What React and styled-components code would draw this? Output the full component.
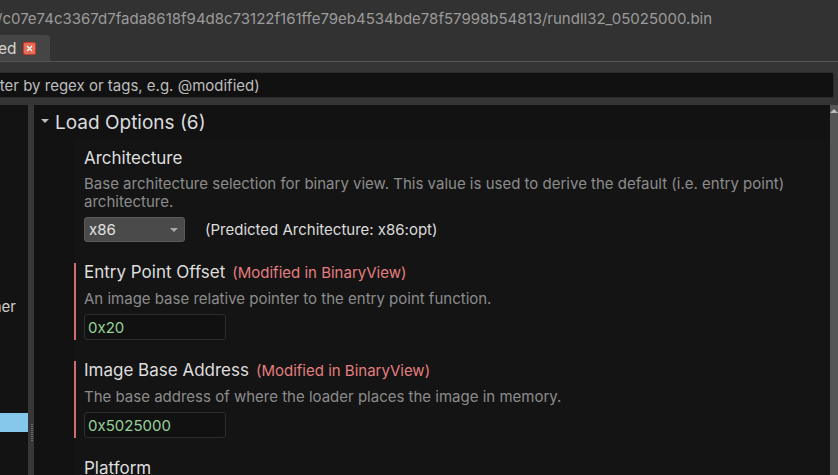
import React from "react";
import styled, { createGlobalStyle } from "styled-components";

const Global = createGlobalStyle`
  html, body { margin: 0; padding: 0; background: #323232; }
  body { font-family: Inter, "Noto Sans", sans-serif; }
  * { box-sizing: border-box; }
`;

const Root = styled.div`
  width: 838px;
  height: 475px;
  overflow: hidden;
  display: flex;
  flex-direction: column;
  background: #323232;
`;

const TitleBar = styled.div`
  height: 35px;
  display: flex;
  align-items: center;
  overflow: hidden;
  white-space: nowrap;
  color: #9b9b9b;
  font-size: 15px;
  padding-top: 1px;
`;

const TitleText = styled.span`
  margin-left: -3px;
`;

const TabBar = styled.div`
  height: 27px;
  display: flex;
  align-items: flex-end;
  border-bottom: 1px solid #555;
`;

const Tab = styled.div`
  height: 26px;
  width: 50px;
  background: #454545;
  border-top-right-radius: 3px;
  display: flex;
  align-items: center;
  gap: 6px;
  overflow: hidden;
  color: #d6d6d6;
  font-size: 15.5px;
`;

const TabLabel = styled.span`
  margin-left: -2px;
`;

const CloseBox = styled.span`
  width: 13px;
  height: 13px;
  border-radius: 2px;
  background: #e56d55;
  border: 1px solid #c63b2b;
  display: flex;
  align-items: center;
  justify-content: center;
`;

const FilterRow = styled.div`
  padding: 10px 4px 4px 0;
  background: #353535;
`;

const FilterInput = styled.div`
  height: 26px;
  background: #111111;
  border: 1px solid #2a2a2a;
  border-left: none;
  border-radius: 0 3px 3px 0;
  display: flex;
  align-items: center;
  color: #bdbdbd;
  font-size: 15px;
  white-space: nowrap;
  overflow: hidden;
`;

const FilterText = styled.span`
  margin-left: -4px;
`;

const Body = styled.div`
  flex: 1;
  display: flex;
  min-height: 0;
  background: #353535;
  padding-top: 3px;
`;

const LeftPanel = styled.div`
  width: 28px;
  background: #131313;
  display: flex;
  flex-direction: column;
  overflow: hidden;
`;

const LeftItem = styled.div`
  height: ${(p) => p.h}px;
  flex: none;
  background: ${(p) => (p.selected ? "#86c8ec" : "transparent")};
  color: #cfcfcf;
  font-size: 15px;
  white-space: nowrap;
  display: flex;
  align-items: center;
  justify-content: flex-end;
  padding-right: 12px;
`;

const Splitter = styled.div`
  width: 6px;
  background: #373737;
  display: flex;
  flex-direction: column;
  justify-content: flex-end;
  padding-bottom: 34px;
  align-items: flex-end;
`;

const Grip = styled.div`
  width: 2px;
  height: 17px;
  margin-right: 1px;
  background: repeating-linear-gradient(to bottom, #6a6a6a 0 1px, transparent 1px 2px);
`;

const Main = styled.div`
  flex: 1;
  background: #121212;
  overflow: hidden;
  display: flex;
  flex-direction: column;
`;

const SectionHeader = styled.div`
  height: 34px;
  display: flex;
  align-items: center;
  padding-left: 7px;
  gap: 6px;
  color: #dcdcdc;
  font-size: 19px;
  flex: none;
`;

const Caret = styled.span`
  width: 0;
  height: 0;
  border-left: 4px solid transparent;
  border-right: 4px solid transparent;
  border-top: 4px solid #bbbbbb;
  margin-top: -2px;
`;

const SectionBody = styled.div`
  margin-left: 40px;
  flex: 1;
  background: #141414;
  display: flex;
  flex-direction: column;
  gap: 21px;
  padding-top: 10px;
`;

const Setting = styled.div`
  border-left: 2px solid ${(p) => (p.modified ? "#d36b72" : "transparent")};
  padding-left: 8px;
  display: flex;
  flex-direction: column;
`;

const SettingTitle = styled.div`
  display: flex;
  align-items: baseline;
  gap: 7px;
  color: #dedede;
  font-size: 17px;
  line-height: 18px;
  white-space: nowrap;
`;

const ModifiedTag = styled.span`
  color: #e57e7e;
  font-size: 15px;
`;

const Description = styled.div`
  color: #8c8c8c;
  font-size: 15px;
  line-height: 18px;
  margin-top: 8px;
  padding-right: 40px;
`;

const ControlRow = styled.div`
  display: flex;
  align-items: center;
  gap: 20px;
  margin-top: 6px;
`;

const Select = styled.div`
  width: 101px;
  height: 25px;
  background: #4a4a4a;
  border: 1px solid #5a5a5a;
  border-radius: 3px;
  display: flex;
  align-items: center;
  justify-content: space-between;
  padding: 0 6px 0 4px;
  color: #e2e2e2;
  font-size: 15px;
`;

const SelectArrow = styled.span`
  width: 0;
  height: 0;
  border-left: 4px solid transparent;
  border-right: 4px solid transparent;
  border-top: 4px solid #aaaaaa;
`;

const Predicted = styled.span`
  color: #dcdcdc;
  font-size: 15px;
`;

const TextField = styled.div`
  width: 142px;
  height: 26px;
  background: #111111;
  border: 1px solid #2e2e2e;
  border-radius: 3px;
  display: flex;
  align-items: center;
  padding-left: 3px;
  color: #94d49a;
  font-size: 15px;
  margin-top: 6px;
`;

const Scrollbar = styled.div`
  width: 8px;
  background: #565656;
  display: flex;
  justify-content: center;
  padding-top: 4px;
`;

const ScrollArrow = styled.span`
  width: 0;
  height: 0;
  border-left: 4px solid transparent;
  border-right: 4px solid transparent;
  border-bottom: 4px solid #bdbdbd;
`;

export default function App() {
  return (
    <Root>
      <Global />
      <TitleBar>
        <TitleText>/c07e74c3367d7fada8618f94d8c73122f161ffe79eb4534bde78f57998b54813/rundll32_05025000.bin</TitleText>
      </TitleBar>
      <TabBar>
        <Tab>
          <TabLabel>ed</TabLabel>
          <CloseBox>
            <svg width="7" height="7" viewBox="0 0 7 7">
              <path d="M1 1L6 6M6 1L1 6" stroke="#fff" strokeWidth="1.3" />
            </svg>
          </CloseBox>
        </Tab>
      </TabBar>
      <FilterRow>
        <FilterInput>
          <FilterText>lter by regex or tags, e.g. @modified)</FilterText>
        </FilterInput>
      </FilterRow>
      <Body>
        <LeftPanel>
          <LeftItem h={189}></LeftItem>
          <LeftItem h={24}>ner</LeftItem>
          <LeftItem h={95}></LeftItem>
          <LeftItem h={19} selected></LeftItem>
        </LeftPanel>
        <Splitter>
          <Grip />
        </Splitter>
        <Main>
          <SectionHeader>
            <Caret />
            Load Options (6)
          </SectionHeader>
          <SectionBody>
            <Setting>
              <SettingTitle>Architecture</SettingTitle>
              <Description>
                Base architecture selection for binary view. This value is used to derive the default (i.e. entry point) architecture.
              </Description>
              <ControlRow>
                <Select>
                  x86
                  <SelectArrow />
                </Select>
                <Predicted>(Predicted Architecture: x86:opt)</Predicted>
              </ControlRow>
            </Setting>
            <Setting modified>
              <SettingTitle>
                Entry Point Offset <ModifiedTag>(Modified in BinaryView)</ModifiedTag>
              </SettingTitle>
              <Description>An image base relative pointer to the entry point function.</Description>
              <TextField>0x20</TextField>
            </Setting>
            <Setting modified>
              <SettingTitle>
                Image Base Address <ModifiedTag>(Modified in BinaryView)</ModifiedTag>
              </SettingTitle>
              <Description>The base address of where the loader places the image in memory.</Description>
              <TextField>0x5025000</TextField>
            </Setting>
            <Setting>
              <SettingTitle>Platform</SettingTitle>
            </Setting>
          </SectionBody>
        </Main>
        <Scrollbar>
          <ScrollArrow />
        </Scrollbar>
      </Body>
    </Root>
  );
}
